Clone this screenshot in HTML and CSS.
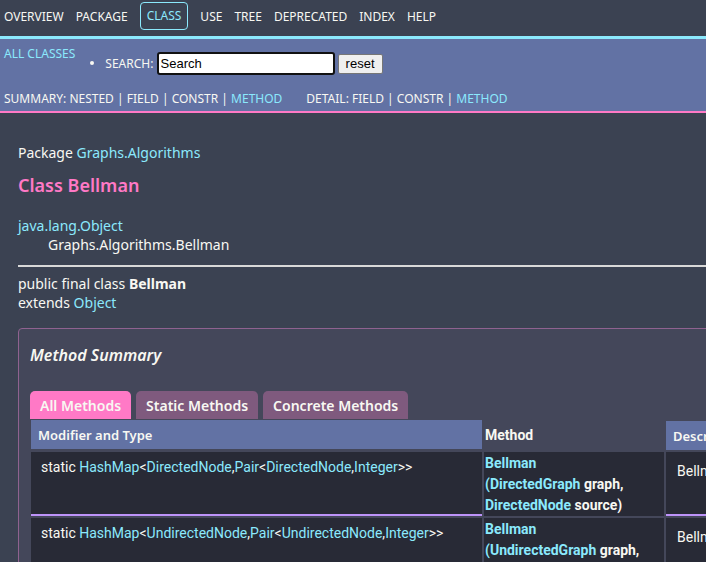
FILE: index.html
```html
<!DOCTYPE html>
<html lang="en">
<head>
<meta charset="utf-8">
<title>Bellman</title>
<link rel="stylesheet" href="styles.css">
</head>
<body>
<header class="top-nav">
  <ul class="nav-list">
    <li><a href="#">OVERVIEW</a></li>
    <li><a href="#">PACKAGE</a></li>
    <li class="nav-current"><span>CLASS</span></li>
    <li><a href="#">USE</a></li>
    <li><a href="#">TREE</a></li>
    <li><a href="#">DEPRECATED</a></li>
    <li><a href="#">INDEX</a></li>
    <li><a href="#">HELP</a></li>
  </ul>
</header>
<div class="sub-nav">
  <div class="sub-row">
    <a class="all-classes" href="#">ALL CLASSES</a>
    <ul class="search-list">
      <li><label for="search">SEARCH:</label>
        <input type="text" id="search" class="search-input" value="Search"><input type="reset" class="reset-btn" value="reset">
      </li>
    </ul>
  </div>
  <div class="sub-links">
    <div>SUMMARY:&nbsp;NESTED&nbsp;<span class="sep">|</span>&nbsp;FIELD&nbsp;<span class="sep">|</span>&nbsp;CONSTR&nbsp;<span class="sep">|</span>&nbsp;<a href="#">METHOD</a></div>
    <div>DETAIL:&nbsp;FIELD&nbsp;<span class="sep">|</span>&nbsp;CONSTR&nbsp;<span class="sep">|</span>&nbsp;<a href="#">METHOD</a></div>
  </div>
</div>
<main class="content">
  <div class="pkg">Package <a href="#">Graphs.Algorithms</a></div>
  <h1 class="class-title">Class Bellman</h1>
  <div class="inherit">
    <a href="#">java.lang.Object</a>
    <div class="inherit-child">Graphs.Algorithms.Bellman</div>
  </div>
  <hr class="rule">
  <div class="signature">public final class <b>Bellman</b><br>extends <a href="#">Object</a></div>

  <section class="summary-box">
    <h2 class="summary-title">Method Summary</h2>
    <div class="tabs">
      <button class="tab tab-active">All Methods</button>
      <button class="tab">Static Methods</button>
      <button class="tab">Concrete Methods</button>
    </div>
    <div class="table">
      <div class="th th-col1">Modifier and Type</div>
      <div class="th th-col2">Method</div>
      <div class="th th-col3">Description</div>

      <div class="td col1 row-line"><span>static <a href="#">HashMap</a>&lt;<a href="#">DirectedNode</a>,<a href="#">Pair</a>&lt;<a href="#">DirectedNode</a>,<a href="#">Integer</a>&gt;&gt;</span></div>
      <div class="td col2"><a href="#">Bellman</a><br><a href="#">(</a><a href="#">DirectedGraph</a> graph,<br><a href="#">DirectedNode</a> source)</div>
      <div class="td col3 row-line">Bellman-Ford algorithm</div>

      <div class="td col1"><span>static <a href="#">HashMap</a>&lt;<a href="#">UndirectedNode</a>,<a href="#">Pair</a>&lt;<a href="#">UndirectedNode</a>,<a href="#">Integer</a>&gt;&gt;</span></div>
      <div class="td col2"><a href="#">Bellman</a><br><a href="#">(</a><a href="#">UndirectedGraph</a> graph,<br><a href="#">UndirectedNode</a> source)</div>
      <div class="td col3">Bellman-Ford algorithm</div>
    </div>
  </section>
</main>
</body>
</html>
```

FILE: styles.css
```css
html, body {
  margin: 0;
  padding: 0;
  overflow: hidden;
}
body {
  background: #3b4252;
  color: #f8f8f2;
  font-family: "Noto Sans", "Open Sans", sans-serif;
  width: 706px;
  height: 562px;
}
a {
  color: #8be9fd;
  text-decoration: none;
}

.top-nav {
  background: #3b4252;
  border-bottom: 3px solid #8be9fd;
  height: 34px;
  padding-top: 2px;
}
.nav-list {
  list-style: none;
  margin: 0;
  padding: 0 0 0 4px;
  display: flex;
  align-items: center;
  height: 28px;
  font-size: 12px;
}
.nav-list li {
  margin-right: 12px;
}
.nav-list a {
  color: #f8f8f2;
}
.nav-current span {
  display: inline-block;
  border: 1px solid #8be9fd;
  border-radius: 4px;
  color: #8be9fd;
  padding: 5px 6px;
  line-height: 16px;
}

.sub-nav {
  background: #6272a4;
  border-bottom: 2px solid #ff79c6;
  height: 72px;
  font-size: 12px;
  color: #f8f8f2;
}
.sub-row {
  display: flex;
  align-items: flex-start;
  padding: 7px 0 0 4px;
  height: 34px;
}
.all-classes {
  line-height: 16px;
}
.search-list {
  margin: 6px 0 0 0;
  padding: 0 0 0 30px;
  list-style: disc;
}
.search-list li {
  display: list-item;
  line-height: 20px;
}
.search-list label {
  vertical-align: middle;
}
.search-input {
  vertical-align: middle;
  width: 170px;
  height: 17px;
  padding: 1px 2px;
  border: 2px solid #111;
  border-radius: 3px;
  font-family: "Liberation Sans", Arial, sans-serif;
  font-size: 13px;
  margin: 0;
  color: #000;
  background: #fff;
  outline: none;
}
.reset-btn {
  vertical-align: middle;
  margin-left: 3px;
  height: 20px;
  width: 45px;
  padding: 0;
  font-family: "Liberation Sans", Arial, sans-serif;
  font-size: 13px;
  background: #efefef;
  border: 1px solid #767676;
  border-radius: 2px;
  color: #000;
}
.sub-links {
  display: flex;
  padding: 11px 0 0 4px;
  gap: 24px;
  line-height: 16px;
}
.sep {
  color: #f8f8f2;
}

.content {
  padding: 30px 0 0 18px;
}
.pkg {
  font-size: 14px;
  line-height: 20px;
}
.class-title {
  color: #ff79c6;
  font-size: 18px;
  font-weight: 600;
  margin: 10px 0 0 0;
  line-height: 24px;
}
.inherit {
  margin-top: 19px;
  font-size: 14px;
  line-height: 19px;
}
.inherit-child {
  padding-left: 30px;
}
.rule {
  border: 0;
  border-top: 2px solid #d8d8d8;
  margin: 11px 0 0 0;
  width: 720px;
}
.signature {
  font-size: 14px;
  line-height: 19px;
  margin-top: 7px;
}
.signature b {
  font-weight: 700;
}

.summary-box {
  margin-top: 16px;
  width: 900px;
  background: #44475a;
  border: 1px solid #8f6290;
  border-radius: 4px;
  padding: 0 0 20px 11px;
}
.summary-title {
  font-size: 16px;
  font-style: italic;
  font-weight: 600;
  margin: 0;
  padding-top: 14px;
  line-height: 24px;
}
.tabs {
  display: flex;
  gap: 5px;
  margin-top: 24px;
}
.tab {
  font-family: "Noto Sans", "Open Sans", sans-serif;
  font-size: 14px;
  font-weight: 600;
  color: #f8f8f2;
  background: #7f5a7e;
  border: 0;
  border-radius: 5px 5px 0 0;
  height: 28px;
  padding: 0 10px;
  margin: 0;
}
.tab-active {
  background: #ff79c6;
}
.table {
  display: grid;
  grid-template-columns: 451px 180px 300px;
  column-gap: 2px;
  row-gap: 2px;
  margin-left: 1px;
  margin-top: 1px;
}
.th {
  font-size: 13px;
  font-weight: 600;
  height: 29px;
  display: flex;
  align-items: center;
  padding-left: 7px;
}
.th-col1, .th-col3 {
  background: #6272a4;
}
.th-col2 {
  padding-left: 1px;
  font-family: Roboto, sans-serif;
  font-size: 14px;
  font-weight: 700;
  align-items: flex-start;
  padding-top: 7px;
  height: 22px;
}
.th-col3 {
  margin-top: 1px;
}
.td {
  box-sizing: border-box;
  background: #282a36;
  font-family: Roboto, sans-serif;
  font-size: 14px;
  line-height: 21px;
  min-height: 64px;
}
.col1 {
  padding: 5px 0 0 10px;
}
.col2 {
  padding: 1px 0 0 1px;
  font-weight: 700;
}
.col3 {
  padding: 9px 0 0 11px;
}
.row-line {
  border-bottom: 2px solid #bd93f9;
}
```
